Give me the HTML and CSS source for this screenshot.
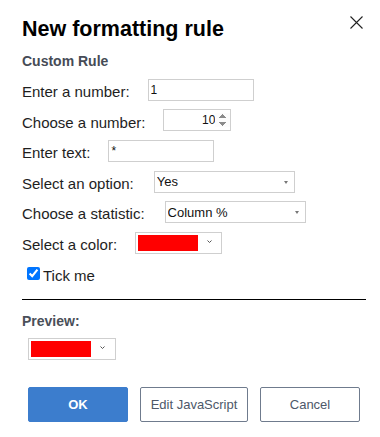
FILE: index.html
```html
<!DOCTYPE html>
<html>
<head>
<meta charset="utf-8">
<link rel="stylesheet" href="styles.css">
</head>
<body>
<div class="dialog">
  <div class="header">
    <h1 class="title">New formatting rule</h1>
    <svg class="close" width="13" height="13" viewBox="0 0 13 13"><path d="M0.5 0.5 L12.5 12.5 M12.5 0.5 L0.5 12.5" stroke="#222" stroke-width="1.1" fill="none"/></svg>
  </div>
  <div class="subtitle">Custom Rule</div>

  <div class="row first">
    <label class="lbl">Enter a number:</label>
    <input class="txt w106" type="text" value="1">
  </div>
  <div class="row">
    <label class="lbl">Choose a number:</label>
    <input class="txt num" type="number" value="10">
  </div>
  <div class="row">
    <label class="lbl">Enter text:</label>
    <input class="txt w106" type="text" value="*">
  </div>
  <div class="row">
    <label class="lbl">Select an option:</label>
    <span class="selwrap"><select class="sel"><option>Yes</option><option>No</option></select></span>
  </div>
  <div class="row">
    <label class="lbl">Choose a statistic:</label>
    <span class="selwrap"><select class="sel"><option>Column %</option></select></span>
  </div>
  <div class="row">
    <label class="lbl">Select a color:</label>
    <div class="color">
      <span class="swatch"></span>
      <svg class="chev" width="5" height="3" viewBox="0 0 5 3"><path d="M0.5 0.5 L2.5 2.5 L4.5 0.5" stroke="#555" stroke-width="1" fill="none"/></svg>
    </div>
  </div>
  <div class="checkrow">
    <input class="cb" type="checkbox" checked>
    <span class="lbl">Tick me</span>
  </div>

  <hr class="rule">

  <div class="preview-title">Preview:</div>
  <div class="color preview">
    <span class="swatch"></span>
    <svg class="chev" width="5" height="3" viewBox="0 0 5 3"><path d="M0.5 0.5 L2.5 2.5 L4.5 0.5" stroke="#555" stroke-width="1" fill="none"/></svg>
  </div>

  <div class="buttons">
    <button class="btn primary">OK</button>
    <button class="btn js">Edit JavaScript</button>
    <button class="btn">Cancel</button>
  </div>
</div>
</body>
</html>
```

FILE: styles.css
```css
html, body {
  margin: 0;
  padding: 0;
  background: #fff;
}
body {
  font-family: "Liberation Sans", Arial, sans-serif;
  color: #1e1e1e;
}
.dialog {
  width: 380px;
  box-sizing: border-box;
  padding: 16px 14px 0 22px;
}
.header {
  display: flex;
  justify-content: space-between;
  align-items: flex-start;
}
.title {
  margin: 0;
  font-size: 21.5px;
  line-height: 26px;
  font-weight: bold;
  color: #000;
}
.close {
  display: block;
  margin: 0 3px 0 0;
}
.subtitle {
  margin-top: 11px;
  font-size: 14px;
  line-height: 16px;
  font-weight: bold;
  color: #464b56;
}
.row {
  display: flex;
  align-items: flex-start;
  gap: 18px;
  margin-top: 6.6px;
}
.row.first {
  margin-top: 10px;
}
.lbl {
  font-size: 15px;
  line-height: 22px;
  padding-top: 2px;
  color: #1e1e1e;
}
.txt {
  box-sizing: border-box;
  height: 22px;
  margin: 0;
  border: 1px solid #cfcfcf;
  padding: 1px 2px;
  font-family: "Liberation Sans", Arial, sans-serif;
  font-size: 12px;
  color: #111;
  outline: none;
}
.w106 {
  width: 106px;
}
.num {
  width: 68px;
  text-align: right;
  padding-right: 0;
  margin-top: -1px;
}
.num::-webkit-inner-spin-button {
  opacity: 1;
}
.selwrap {
  position: relative;
  display: block;
  margin-left: 2px;
}
.selwrap::after {
  content: "";
  position: absolute;
  right: 7px;
  top: 10px;
  border-left: 2.5px solid transparent;
  border-right: 2.5px solid transparent;
  border-top: 3px solid #777;
  pointer-events: none;
}
.sel {
  -webkit-appearance: none;
  appearance: none;
  box-sizing: border-box;
  width: 141px;
  height: 22px;
  margin: 0;
  border: 1px solid #cfcfcf;
  border-radius: 0;
  background: #fff;
  padding: 0 2px;
  font-family: "Liberation Sans", Arial, sans-serif;
  font-size: 13px;
  color: #111;
  outline: none;
}
.color {
  box-sizing: border-box;
  width: 87px;
  height: 22px;
  border: 1px solid #cfcfcf;
  padding: 2px;
  display: flex;
  align-items: center;
}
.swatch {
  display: block;
  width: 60px;
  height: 16px;
  background: #ff0000;
}
.chev {
  display: block;
  margin-left: 9px;
  margin-top: -3px;
}
.checkrow {
  display: flex;
  align-items: flex-start;
  margin-top: 8.8px;
}
.cb {
  width: 13px;
  height: 13px;
  margin: 2px 3px 0 5px;
  accent-color: #0075ff;
}
.checkrow .lbl {
  padding-top: 0;
}
.rule {
  margin: 12px 0 0 0;
  border: 0;
  border-top: 1px solid #000;
  height: 0;
}
.preview-title {
  margin-top: 13.5px;
  font-size: 14px;
  line-height: 16px;
  font-weight: bold;
  color: #4a4f59;
}
.color.preview {
  width: 88px;
  margin-top: 8.5px;
  margin-left: 6px;
}
.buttons {
  display: flex;
  gap: 12px;
  margin-top: 27px;
  margin-left: 6px;
}
.btn {
  box-sizing: border-box;
  width: 100px;
  height: 35px;
  margin: 0;
  border: 1px solid #6f7b8d;
  border-radius: 2px;
  background: #fff;
  font-family: "Liberation Sans", Arial, sans-serif;
  font-size: 13px;
  color: #4d5869;
  padding: 0;
}
.btn.js {
  width: 108px;
}
.btn.primary {
  background: #3c7dcd;
  border-color: #3c7dcd;
  color: #fff;
  font-weight: bold;
}
```
